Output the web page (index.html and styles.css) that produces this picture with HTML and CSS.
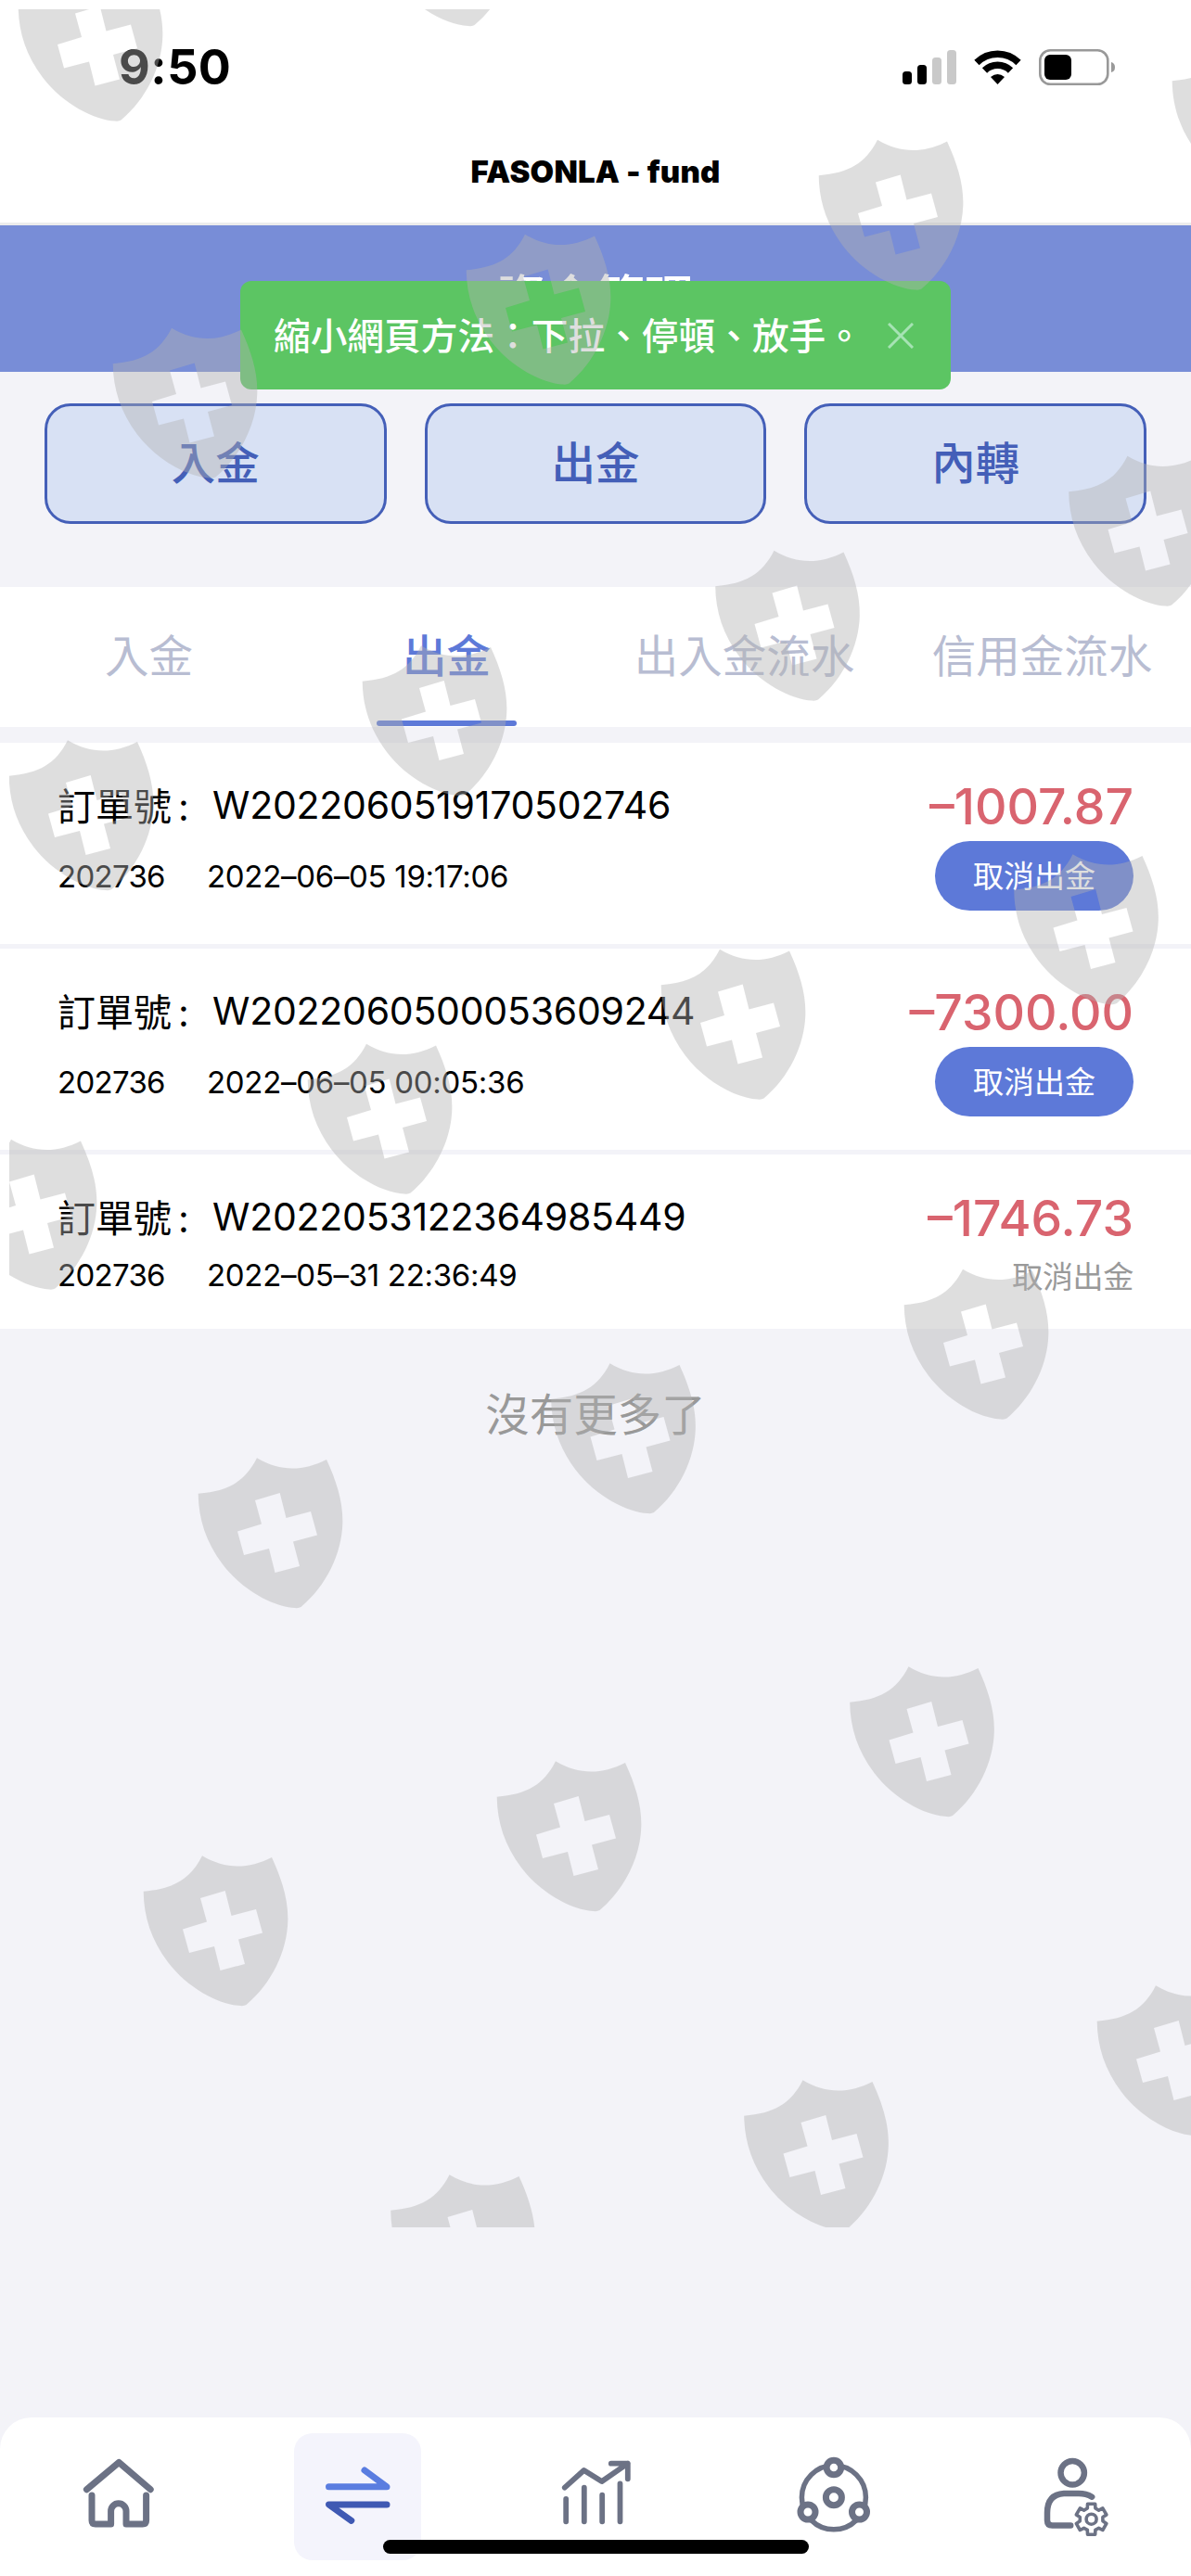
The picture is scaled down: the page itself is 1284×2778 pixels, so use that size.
FILE: index.html
```html
<!DOCTYPE html>
<html lang="zh-Hant">
<head>
  <meta charset="UTF-8" />
  <meta name="viewport" content="width=device-width, initial-scale=1.0"/>
  <title>FASONLA - fund</title>
  <link rel="stylesheet" href="styles.css">
</head>
<body>
  <div class="status-bar">
    <span class="time">9:50</span>
    <svg class="status-icons" width="230" height="40" viewBox="0 0 230 40">
      <rect x="1" y="24" width="10" height="14" rx="3.5"/>
      <rect x="17" y="17" width="10" height="21" rx="3.5"/>
      <rect x="33" y="9" width="10" height="29" rx="3.5" fill="#c9c9c9"/>
      <rect x="49" y="1" width="10" height="37" rx="3.5" fill="#c9c9c9"/>
      <g fill="none" stroke="#000" stroke-width="7.5">
        <path d="M81 14.5a32 32 0 0 1 45 0"/>
        <path d="M89.5 23a20 20 0 0 1 28 0"/>
      </g>
      <path d="M96 30q7.500-6 15 0l-7.500 8z"/>
      <rect x="149.300" y="1.300" width="73" height="36.500" rx="11" fill="none" stroke="#999" stroke-width="2.600"/>
      <rect x="154" y="6" width="29" height="27" rx="6"/>
      <path d="M226 14q4 1 4 5.500t-4 5.500z" fill="#999"/>
    </svg>
  </div>
  <div class="title-bar">FASONLA - fund</div>

  <header class="page-header">資金管理</header>

  <div class="toast">
    <span>縮小網頁方法：下拉、停頓、放手。</span>
    <svg width="28" height="28" viewBox="0 0 28 28"><path d="M1 1l26 26M27 1L1 27"/></svg>
  </div>

  <div class="actions">
    <button>入金</button>
    <button>出金</button>
    <button>內轉</button>
  </div>

  <nav class="tabs">
    <a>入金</a>
    <a class="active">出金</a>
    <a>出入金流水</a>
    <a>信用金流水</a>
  </nav>

  <main class="list">
    <div class="item">
      <div class="row"><span class="label">訂單號<i>:</i></span><span class="order">W2022060519170502746</span><span class="amount">–1007.87</span></div>
      <div class="row sub"><span class="account">202736</span><span class="date">2022–06–05 19:17:06</span><button class="cancel">取消出金</button></div>
    </div>
    <div class="item">
      <div class="row"><span class="label">訂單號<i>:</i></span><span class="order">W2022060500053609244</span><span class="amount">–7300.00</span></div>
      <div class="row sub"><span class="account">202736</span><span class="date">2022–06–05 00:05:36</span><button class="cancel">取消出金</button></div>
    </div>
    <div class="item">
      <div class="row"><span class="label">訂單號<i>:</i></span><span class="order">W2022053122364985449</span><span class="amount">–1746.73</span></div>
      <div class="row sub"><span class="account">202736</span><span class="date">2022–05–31 22:36:49</span><span class="canceled">取消出金</span></div>
    </div>
  </main>
  <p class="no-more">沒有更多了</p>

  <footer class="tabbar">
    <a>
      <svg viewBox="0 0 137 137" stroke-width="7">
        <path d="M33.400 60.700L68.200 31.500l34 29.200"/>
        <path d="M39 67v27q0 4 4 4h16.600V84a8.200 8.200 0 0 1 16.400 0v14h17.600q4 0 4-4V67"/>
      </svg>
    </a>
    <a class="active">
      <svg viewBox="0 0 137 137" stroke-width="7">
        <path stroke="#5a7de0" d="M37.500 57.700H100L76 40"/>
        <path stroke="#3f59b3" d="M100 77H37.500l24.300 17.300"/>
      </svg>
    </a>
    <a>
      <svg viewBox="0 0 137 137" stroke-width="5.800">
        <path d="M35.800 58.700L56.500 40l19.300 12 28-19.300M85.800 32.700h18v16.600"/>
        <path d="M37.200 71v24.300M56.800 58.700v36.600M76.200 66.700v28.600M95.500 54.300v41"/>
      </svg>
    </a>
    <a>
      <svg viewBox="0 0 137 137" stroke-width="5.500">
        <circle cx="68.900" cy="69.300" r="34.500"/>
        <g fill="#fff" stroke-width="7">
          <circle cx="68.900" cy="37" r="7.800"/>
          <circle cx="68.900" cy="69.300" r="8.500"/>
          <circle cx="41" cy="85" r="8"/>
          <circle cx="96.500" cy="85" r="8"/>
        </g>
      </svg>
    </a>
    <a>
      <svg viewBox="0 0 137 137" stroke-width="6.500">
        <circle cx="69.200" cy="42.700" r="12.700"/>
        <path d="M90.200 68.700Q84 65 76 65H60Q42 66 42 86v8q0 5.500 5.500 5.500h19.700"/>
        <g stroke-width="3.600" transform="translate(89.600 92.700)">
          <circle r="5.500"/>
          <path d="M-4.300-11.700l.2-4.800h8.200l.2 4.800L8-9.600l4.200-2.200 4.100 7.100-4 2.600v4.200l4 2.600-4.100 7.100L8 9.600l-3.700 2.100-.2 4.800h-8.200l-.2-4.800L-8 9.600l-4.200 2.200-4.100-7.100 4-2.600v-4.200l-4-2.600 4.100-7.100L-8-9.600z"/>
        </g>
      </svg>
    </a>
    <div class="home-indicator"></div>
  </footer>

  <!-- watermark -->
  <svg class="watermark" viewBox="10 10 1274 2392">
    <defs>
      <path id="shield" fill-rule="evenodd" d="M13.700 60.700C46 58 64 48 77 22.300C102 37 126 37 152 24C163 48 170 70 169.300 93C168.500 125 152 160 124.500 183Q122 184.500 118 184C96 183 62 166 40 137C22 113 14 88 13.700 60.700ZM75 68L101.700 60L108.500 87L135 80L142 105.500L116 112.500L123 139L96.500 146L90 120L63 127L56 101.500L82 93.500Z"/>
    </defs>
    <use href="#shield" x="6" y="-53.500"/>
    <use href="#shield" x="387" y="-156"/>
    <use href="#shield" x="108" y="331.500"/>
    <use href="#shield" x="489" y="230.500"/>
    <use href="#shield" x="869" y="128.500"/>
    <use href="#shield" x="1250" y="26.500"/>
    <use href="#shield" x="-4" y="776"/>
    <use href="#shield" x="377" y="674"/>
    <use href="#shield" x="757.500" y="571.500"/>
    <use href="#shield" x="1138.500" y="469.500"/>
    <use href="#shield" x="-65" y="1206.500"/>
    <use href="#shield" x="318" y="1103.500"/>
    <use href="#shield" x="699" y="1001.500"/>
    <use href="#shield" x="1079.500" y="899"/>
    <use href="#shield" x="200" y="1550"/>
    <use href="#shield" x="580.500" y="1448"/>
    <use href="#shield" x="961" y="1346.500"/>
    <use href="#shield" x="141" y="1979"/>
    <use href="#shield" x="522" y="1877"/>
    <use href="#shield" x="902.500" y="1775"/>
    <use href="#shield" x="407.500" y="2323"/>
    <use href="#shield" x="788.500" y="2221"/>
    <use href="#shield" x="1169" y="2119"/>
  </svg>
</body>
</html>
```
FILE: styles.css
```css
* {
  box-sizing: border-box;
}

body {
  margin: 0;
  height: 2778px;
  display: flex;
  flex-direction: column;
  position: relative;
  overflow: hidden;
  background: #f3f3f8;
  color: #000;
  font-family: Inter, "Noto Sans CJK TC", sans-serif;
}

button {
  font-family: inherit;
}

.status-bar {
  height: 146px;
  background: #fff;
  display: flex;
  justify-content: space-between;
  padding: 53px 82px 0 128px;
}

.time {
  font-size: 52px;
  font-weight: 700;
  line-height: 40px;
  letter-spacing: 0.5px;
}

.title-bar {
  height: 97px;
  background: #fff;
  border-bottom: 3px solid #ececec;
  text-align: center;
  font-size: 33px;
  font-weight: 900;
  line-height: 78px;
  letter-spacing: 0.2px;
}

.page-header {
  height: 158px;
  background: #788dd7;
  color: #fff;
  text-align: center;
  font-size: 53px;
  font-weight: 500;
  line-height: 158px;
}

.toast {
  position: absolute;
  top: 303px;
  left: 259px;
  width: 766px;
  height: 117px;
  padding: 0 40px 0 36px;
  display: flex;
  align-items: center;
  justify-content: space-between;
  border-radius: 12px;
  background: #5cc563;
  color: #fff;
  font-family: "Noto Sans CJK TC", sans-serif;
  font-size: 39.7px;
  font-weight: 500;
  white-space: nowrap;
}

.toast span {
  padding-bottom: 5px;
}

.toast svg {
  fill: none;
  stroke: #a6e3b4;
  stroke-width: 3;
}

.actions {
  display: flex;
  gap: 41px;
  padding: 34px 48px 68px;
}

.actions button {
  flex: 1;
  height: 130px;
  padding: 0 0 7px;
  border: 3px solid #445fb8;
  border-radius: 28px;
  background: #d8e1f4;
  color: #445fb8;
  font-size: 47.5px;
  font-weight: 500;
}

.tabs {
  display: flex;
  height: 151px;
  margin-bottom: 17px;
  background: #fff;
}

.tabs a {
  flex: 1;
  position: relative;
  text-align: center;
  color: #b8bdd2;
  font-size: 47.5px;
  font-weight: 400;
  line-height: 150px;
  white-space: nowrap;
}

.tabs .active {
  color: #5d79d8;
  font-weight: 500;
}

.tabs .active::after {
  content: "";
  position: absolute;
  left: 85px;
  bottom: 1px;
  width: 151px;
  height: 6px;
  border-radius: 3px;
  background: #5d79d8;
}

.list {
  display: flex;
  flex-direction: column;
  gap: 5px;
}

.item {
  background: #fff;
  padding: 37px 62px 36px;
}

.row {
  display: flex;
  align-items: center;
  height: 69px;
  padding-bottom: 7px;
  white-space: nowrap;
}

.sub {
  height: 75px;
  padding-bottom: 0;
  font-size: 33px;
  letter-spacing: -0.3px;
}

.item:last-child .sub {
  height: 48px;
  margin-bottom: -2px;
}

.label {
  width: 167px;
  padding-bottom: 5px;
  font-size: 41px;
}

.label i {
  margin-left: 7px;
  font-style: normal;
}

.order {
  padding-bottom: 3px;
  font-size: 41px;
  letter-spacing: -0.25px;
}

.amount {
  margin-left: auto;
  color: #d9646f;
  font-size: 53.5px;
  font-weight: 550;
}

.account {
  width: 161px;
  letter-spacing: -0.7px;
}

.cancel {
  width: 214px;
  height: 75px;
  margin-left: auto;
  padding: 0 0 3px;
  border: none;
  border-radius: 38px;
  background: #5d79d8;
  color: #fff;
  font-size: 33px;
  font-weight: 400;
}

.canceled {
  margin-left: auto;
  color: #999;
  font-weight: 400;
}

.no-more {
  margin: 57px 0 0;
  text-align: center;
  color: #999;
  font-size: 47.5px;
  font-weight: 400;
  line-height: 72px;
}

.tabbar {
  position: relative;
  display: flex;
  height: 171px;
  margin-top: auto;
  padding-top: 17px;
  border-radius: 34px 34px 0 0;
  background: #fff;
}

.tabbar a {
  flex: 1;
  text-align: center;
}

.tabbar svg {
  width: 137px;
  height: 137px;
  border-radius: 20px;
  fill: none;
  stroke: #6c7285;
  stroke-linecap: round;
  stroke-linejoin: round;
}

.tabbar .active svg {
  background: #f4f4fc;
}

.home-indicator {
  position: absolute;
  left: 413px;
  bottom: 24px;
  width: 459px;
  height: 15px;
  border-radius: 8px;
  background: #000;
}

.watermark {
  position: absolute;
  top: 10px;
  left: 10px;
  width: 1274px;
  height: 2392px;
  overflow: hidden;
  fill: #b2b2b2;
  opacity: 0.416;
}
```
